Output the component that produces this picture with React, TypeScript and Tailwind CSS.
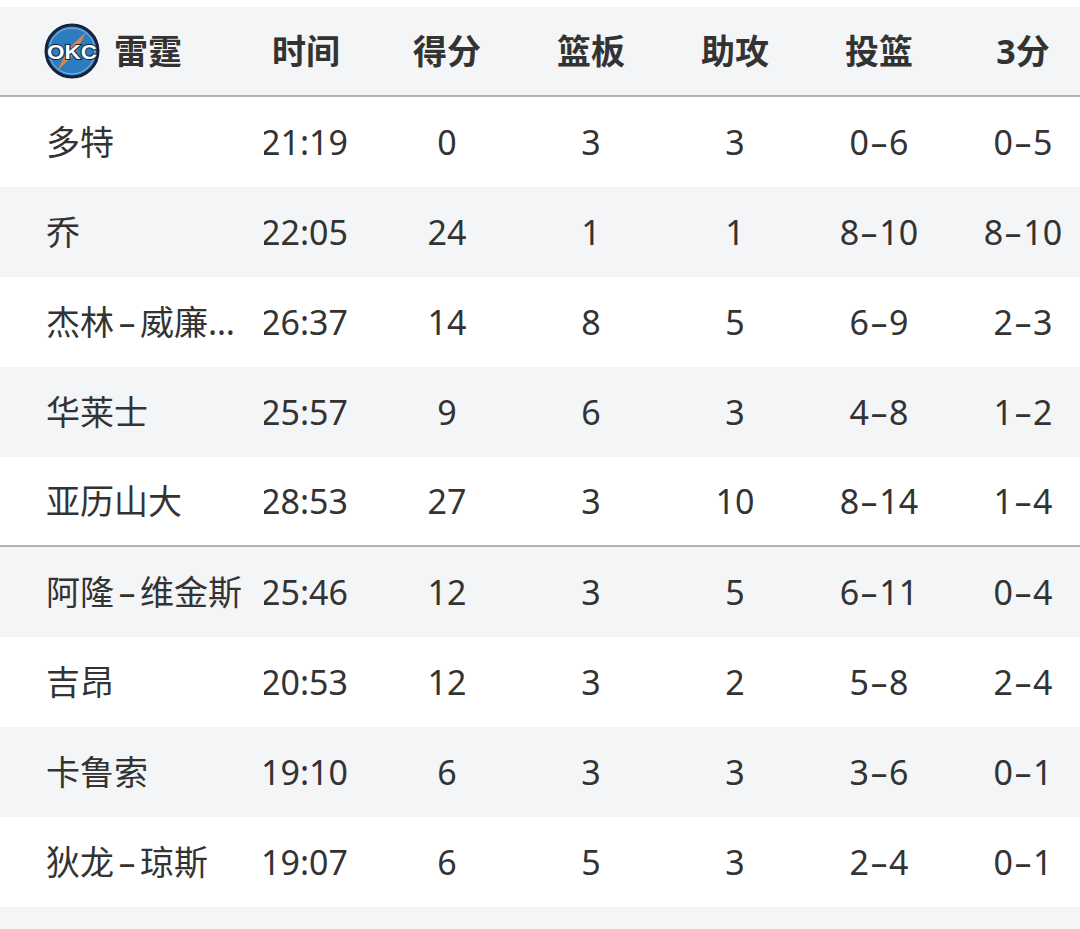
import React from 'react';

type Row = { name: string; time: string; pts: string; reb: string; ast: string; fg: string; tp: string };

const rows: Row[] = [
  { name: '多特', time: '21:19', pts: '0', reb: '3', ast: '3', fg: '0-6', tp: '0-5' },
  { name: '乔', time: '22:05', pts: '24', reb: '1', ast: '1', fg: '8-10', tp: '8-10' },
  { name: '杰林-威廉姆斯', time: '26:37', pts: '14', reb: '8', ast: '5', fg: '6-9', tp: '2-3' },
  { name: '华莱士', time: '25:57', pts: '9', reb: '6', ast: '3', fg: '4-8', tp: '1-2' },
  { name: '亚历山大', time: '28:53', pts: '27', reb: '3', ast: '10', fg: '8-14', tp: '1-4' },
  { name: '阿隆-维金斯', time: '25:46', pts: '12', reb: '3', ast: '5', fg: '6-11', tp: '0-4' },
  { name: '吉昂', time: '20:53', pts: '12', reb: '3', ast: '2', fg: '5-8', tp: '2-4' },
  { name: '卡鲁索', time: '19:10', pts: '6', reb: '3', ast: '3', fg: '3-6', tp: '0-1' },
  { name: '狄龙-琼斯', time: '19:07', pts: '6', reb: '5', ast: '3', fg: '2-4', tp: '0-1' },
];

const font = { fontFamily: '"Noto Sans", "Noto Sans CJK SC", sans-serif' };

const OkcLogo = () => (
  <svg width="56" height="56" viewBox="0 0 56 56">
    <circle cx="28" cy="28" r="26" fill="#2b7cc0" stroke="#16233f" strokeWidth="3" />
    <circle cx="28" cy="28" r="23" fill="none" stroke="#ffffff" strokeWidth="0.8" opacity="0.6" />
    <path d="M42 9 L31 31 L13 48 L25 25 Z" fill="#e8823a" />
    <text
      x="28"
      y="35.5"
      textAnchor="middle"
      fontSize="21"
      fontWeight="900"
      fill="#ffffff"
      stroke="#16233f"
      strokeWidth="2"
      paintOrder="stroke"
      fontFamily='"Liberation Sans", sans-serif'
      textLength="50"
      lengthAdjust="spacingAndGlyphs"
    >
      OKC
    </text>
  </svg>
);

const Dashed = ({ text, wide }: { text: string; wide?: boolean }) => {
  const parts = text.split('-');
  return (
    <>
      {parts.map((p, i) => (
        <React.Fragment key={i}>
          {i > 0 && (
            <span className={`inline-block scale-x-[1.7] text-center ${wide ? 'w-[26px]' : 'w-[20px]'}`}>-</span>
          )}
          {p}
        </React.Fragment>
      ))}
    </>
  );
};

const statCols = ['得分', '篮板', '助攻', '投篮', '3分'];

export default function App() {
  return (
    <div className="h-[929px] w-[1080px] overflow-hidden bg-white pt-[7px] text-[#333333]" style={font}>
      <div className="flex h-[90px] items-center border-b-2 border-[#b3b3b3] bg-[#f4f5f7] text-[34px] font-bold">
        <div className="flex w-[264px] shrink-0 items-center gap-[14px] pl-[44px]">
          <OkcLogo />
          <span>雷霆</span>
        </div>
        <div className="flex w-[84px] shrink-0 justify-center">时间</div>
        <div className="w-[27px] shrink-0" />
        {statCols.map((c) => (
          <div key={c} className="flex w-[144px] shrink-0 justify-center">
            {c}
          </div>
        ))}
      </div>
      {rows.map((r, i) => (
        <div
          key={r.name}
          className={`flex h-[90px] items-center text-[34px] ${i % 2 === 1 ? 'bg-[#f4f5f7]' : 'bg-white'} ${
            i === 4 ? 'border-b-2 border-[#b3b3b3]' : ''
          }`}
        >
          <div className="w-[264px] shrink-0 pl-[46px]">
            <div className="w-[208px] overflow-hidden text-ellipsis whitespace-nowrap">
              <Dashed text={r.name} wide />
            </div>
          </div>
          <div className="flex w-[84px] shrink-0 justify-end overflow-hidden whitespace-nowrap">{r.time}</div>
          <div className="w-[27px] shrink-0" />
          {[r.pts, r.reb, r.ast, r.fg, r.tp].map((v, j) => (
            <div key={j} className="flex w-[144px] shrink-0 justify-center whitespace-nowrap">
              <Dashed text={v} />
            </div>
          ))}
        </div>
      ))}
      <div className="h-[90px] bg-[#f4f5f7]" />
    </div>
  );
}
